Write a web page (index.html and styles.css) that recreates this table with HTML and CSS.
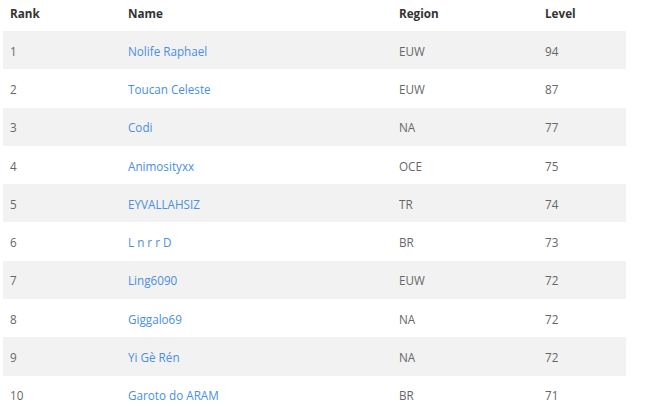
FILE: index.html
```html
<!DOCTYPE html>
<html>
<head>
<meta charset="utf-8">
<link rel="stylesheet" href="styles.css">
</head>
<body>
<table class="ranking">
  <colgroup>
    <col class="c-rank"><col class="c-name"><col class="c-region"><col class="c-level">
  </colgroup>
  <thead>
    <tr><th>Rank</th><th>Name</th><th>Region</th><th>Level</th></tr>
  </thead>
  <tbody>
    <tr><td>1</td><td><a href="#">Nolife Raphael</a></td><td>EUW</td><td>94</td></tr>
    <tr><td>2</td><td><a href="#">Toucan Celeste</a></td><td>EUW</td><td>87</td></tr>
    <tr><td>3</td><td><a href="#">Codi</a></td><td>NA</td><td>77</td></tr>
    <tr><td>4</td><td><a href="#">Animosityxx</a></td><td>OCE</td><td>75</td></tr>
    <tr><td>5</td><td><a href="#">EYVALLAHSIZ</a></td><td>TR</td><td>74</td></tr>
    <tr><td>6</td><td><a href="#">L n r r D</a></td><td>BR</td><td>73</td></tr>
    <tr><td>7</td><td><a href="#">Ling6090</a></td><td>EUW</td><td>72</td></tr>
    <tr><td>8</td><td><a href="#">Giggalo69</a></td><td>NA</td><td>72</td></tr>
    <tr><td>9</td><td><a href="#">Yi Gè Rén</a></td><td>NA</td><td>72</td></tr>
    <tr><td>10</td><td><a href="#">Garoto do ARAM</a></td><td>BR</td><td>71</td></tr>
  </tbody>
</table>
</body>
</html>
```
FILE: styles.css
```css
html, body {
  margin: 0;
  padding: 0;
  background: #fff;
}
body {
  padding: 0 3px;
  font-family: "Open Sans", "Noto Sans", sans-serif;
  font-size: 11.7px;
  line-height: 16px;
  color: #666;
}
.ranking {
  width: 623px;
  border-collapse: collapse;
  table-layout: fixed;
}
.c-rank { width: 118px; }
.c-name { width: 271px; }
.c-region { width: 146px; }
.c-level { width: 88px; }
.ranking thead tr {
  height: 31px;
}
.ranking th {
  padding: 0 7px 6px;
  text-align: left;
  font-weight: 700;
  color: #333;
  vertical-align: middle;
}
.ranking tbody tr {
  height: 38.3px;
}
.ranking td {
  padding: 1px 7px 0;
  vertical-align: middle;
}
.ranking tbody tr:nth-child(odd) td {
  background: #f2f2f2;
}
.ranking a {
  color: #4a8fe0;
  text-decoration: none;
}
```
